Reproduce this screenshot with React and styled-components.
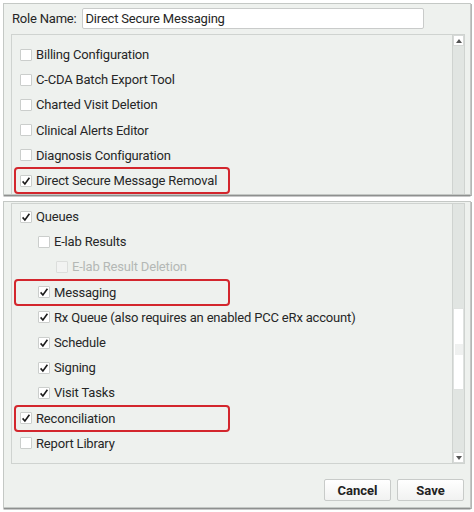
import React from "react";
import styled, { createGlobalStyle, css } from "styled-components";

const GlobalStyle = createGlobalStyle`
  html, body { margin: 0; padding: 0; background: #ffffff; }
  body { font-family: Roboto, "Liberation Sans", Arial, sans-serif; }
  * { box-sizing: border-box; }
`;

const Page = styled.div`
  width: 474px;
  height: 512px;
  padding: 3px 0 0 3px;
  display: flex;
  flex-direction: column;
  gap: 6px;
  overflow: hidden;
`;

const Panel = styled.section`
  width: 468px;
  height: ${(p) => p.$h}px;
  flex-shrink: 0;
  background: #eef1ee;
  border: 1px solid #c4c8c5;
  box-shadow: 0 2px 0 -0.5px #8e908f, 1px 1px 0 #b3b6b4;
  overflow: hidden;
  display: flex;
  flex-direction: column;
  padding: ${(p) => p.$pad};
`;

const RoleRow = styled.div`
  display: flex;
  align-items: center;
  height: 21px;
  gap: 5px;
  padding-left: 1px;
`;

const Label = styled.span`
  font-size: 13px;
  letter-spacing: -0.2px;
  color: #262626;
  white-space: nowrap;
`;

const TextInput = styled.div`
  width: 342px;
  height: 21px;
  background: #fff;
  border: 1px solid #c9cbca;
  border-radius: 2px;
  padding: 0 3px;
  display: flex;
  align-items: center;
  font-size: 13px;
  letter-spacing: -0.2px;
  color: #262626;
`;

const ListBox = styled.div`
  margin-top: ${(p) => p.$mt}px;
  height: ${(p) => p.$h}px;
  flex-shrink: 0;
  border: 1px solid #cfd3d0;
  background: #eef1ee;
  display: flex;
`;

const Items = styled.div`
  flex: 1;
  padding-top: ${(p) => p.$pt}px;
  display: flex;
  flex-direction: column;
`;

const Row = styled.div`
  position: relative;
  height: 25.2px;
  display: flex;
  align-items: center;
  gap: 4px;
  padding-left: ${(p) => 8 + p.$level * 18}px;
  font-size: 13px;
  letter-spacing: -0.18px;
  color: ${(p) => (p.$disabled ? "#b4b8b5" : "#262727")};
  white-space: nowrap;
  ${(p) =>
    p.$highlight &&
    css`
      &::after {
        content: "";
        position: absolute;
        left: 2px;
        width: 212px;
        top: -1px;
        bottom: -1px;
        border: 2px solid #d3262d;
        border-radius: 4px;
      }
    `}
`;

const Box = styled.span`
  width: 12px;
  height: 12px;
  flex-shrink: 0;
  background: ${(p) => (p.$disabled ? "#f2f3f2" : "#ffffff")};
  border: 1px solid ${(p) => (p.$disabled ? "#dcdedc" : "#cbcecc")};
  border-radius: 1px;
  display: flex;
  align-items: center;
  justify-content: center;
`;

const ScrollBar = styled.div`
  width: 12px;
  flex-shrink: 0;
  display: flex;
  flex-direction: column;
  border-left: 1px solid #cfd3d0;
`;

const ArrowButton = styled.div`
  height: 11px;
  flex-shrink: 0;
  background: #ffffff;
  border: 1px solid #d6d9d7;
  display: flex;
  align-items: center;
  justify-content: center;
`;

const Track = styled.div`
  flex: ${(p) => (p.$h ? "none" : "1")};
  height: ${(p) => (p.$h ? `${p.$h}px` : "auto")};
  background: #e1e5e2;
`;

const Thumb = styled.div`
  height: ${(p) => p.$h}px;
  flex-shrink: 0;
  background: #ffffff;
  border: 1px solid #dfe2e0;
  display: flex;
  align-items: center;
  justify-content: center;
`;

const Grip = styled.div`
  width: 8px;
  height: 11px;
  background-image: radial-gradient(circle, #dcdfdd 0.6px, transparent 0.8px);
  background-size: 2px 2px;
`;

const Footer = styled.div`
  display: flex;
  justify-content: flex-end;
  gap: 6px;
  margin-top: 15px;
  padding-right: 1px;
`;

const Button = styled.button`
  width: 67px;
  height: 22px;
  border: 1px solid #c8cbc9;
  border-radius: 2px;
  background: linear-gradient(#ffffff, #f1f2f1);
  font-family: Roboto, "Liberation Sans", Arial, sans-serif;
  font-weight: 700;
  font-size: 13px;
  color: #222;
  padding: 0;
`;

const Check = () => (
  <svg width="10" height="10" viewBox="0 0 10 10">
    <path d="M1.6 5.4 L3.9 8 L8.4 1.8" fill="none" stroke="#1c1c1c" strokeWidth="1.6" />
  </svg>
);

const Arrow = ({ down }) => (
  <svg width="6" height="4" viewBox="0 0 6 4">
    <path d={down ? "M0 0 L6 0 L3 4 Z" : "M0 4 L6 4 L3 0 Z"} fill="#555" />
  </svg>
);

const CheckRow = ({ label, checked, level = 0, disabled, highlight }) => (
  <Row $level={level} $disabled={disabled} $highlight={highlight}>
    <Box $disabled={disabled}>{checked && <Check />}</Box>
    <span>{label}</span>
  </Row>
);

const topItems = [
  { label: "Billing Configuration" },
  { label: "C-CDA Batch Export Tool" },
  { label: "Charted Visit Deletion" },
  { label: "Clinical Alerts Editor" },
  { label: "Diagnosis Configuration" },
  { label: "Direct Secure Message Removal", checked: true, highlight: true },
];

const bottomItems = [
  { label: "Queues", checked: true },
  { label: "E-lab Results", level: 1 },
  { label: "E-lab Result Deletion", level: 2, disabled: true },
  { label: "Messaging", level: 1, checked: true, highlight: true },
  { label: "Rx Queue (also requires an enabled PCC eRx account)", level: 1, checked: true },
  { label: "Schedule", level: 1, checked: true },
  { label: "Signing", level: 1, checked: true },
  { label: "Visit Tasks", level: 1, checked: true },
  { label: "Reconciliation", checked: true, highlight: true },
  { label: "Report Library" },
];

export default function App() {
  return (
    <>
      <GlobalStyle />
      <Page>
        <Panel $h={192} $pad="4px 5px 0 7px">
          <RoleRow>
            <Label>Role Name:</Label>
            <TextInput>Direct Secure Messaging</TextInput>
          </RoleRow>
          <ListBox $mt={5} $h={200}>
            <Items $pt={7}>
              {topItems.map((it) => (
                <CheckRow key={it.label} {...it} />
              ))}
            </Items>
            <ScrollBar>
              <ArrowButton>
                <Arrow />
              </ArrowButton>
              <Track />
            </ScrollBar>
          </ListBox>
        </Panel>
        <Panel $h={307} $pad="1px 5px 0 7px">
          <ListBox $mt={0} $h={261}>
            <Items $pt={0}>
              {bottomItems.map((it) => (
                <CheckRow key={it.label} {...it} />
              ))}
            </Items>
            <ScrollBar>
              <Track $h={104} />
              <Thumb $h={82}>
                <Grip />
              </Thumb>
              <Track />
              <ArrowButton>
                <Arrow down />
              </ArrowButton>
            </ScrollBar>
          </ListBox>
          <Footer>
            <Button>Cancel</Button>
            <Button>Save</Button>
          </Footer>
        </Panel>
      </Page>
    </>
  );
}
